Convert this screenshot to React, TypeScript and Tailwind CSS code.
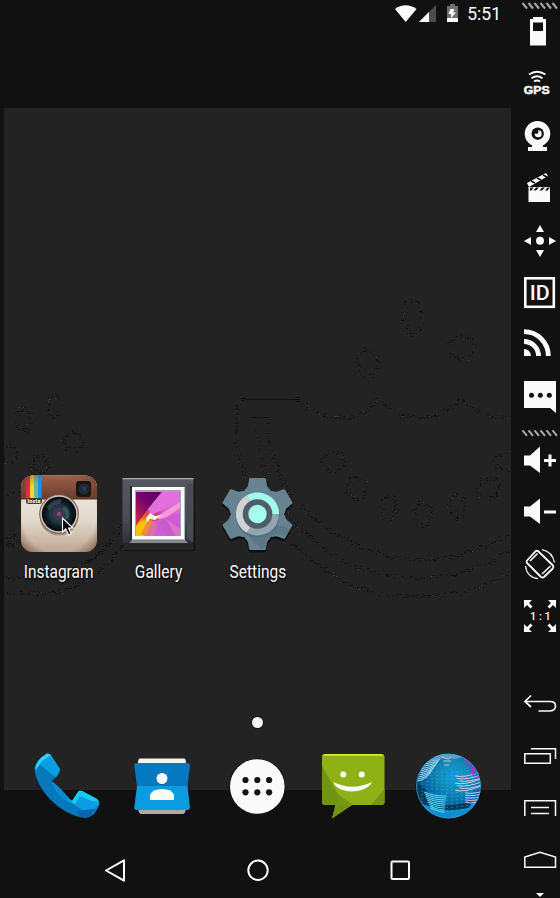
import type { ReactNode } from "react";

type Point = [number, number];

const SEEDS = [
  [412, 317, 9, 17], [461, 347, 13, 12], [367, 363, 11, 13], [333, 461, 11, 9],
  [356, 488, 10, 10], [388, 507, 8, 12], [422, 513, 9, 12], [456, 506, 8, 12],
  [488, 488, 10, 10], [506, 461, 11, 9], [23, 419, 7, 11], [54, 406, 6, 11],
  [73, 441, 10, 9], [39, 465, 8, 9], [8, 454, 8, 9], [12, 541, 5, 5],
];

const RINDS: Point[][] = [
  [[303, 403], [312, 411], [325, 416], [345, 417], [358, 415], [368, 408], [377, 398]],
  [[381, 400], [393, 411], [404, 416], [425, 417], [440, 413], [452, 406], [461, 397]],
  [[463, 401], [477, 411], [490, 416], [511, 417]],
  [[268, 419], [267, 433], [272, 455], [280, 475], [290, 493], [305, 511], [330, 530], [360, 547], [390, 556], [415, 559], [450, 557], [485, 546], [511, 532]],
  [[256, 430], [258, 445], [263, 470], [273, 494], [298, 527], [322, 548], [350, 565], [385, 575], [415, 578], [455, 574], [490, 562], [511, 549]],
  [[237, 404], [236, 440], [238, 455], [244, 474], [262, 510], [290, 542], [325, 570], [350, 584], [378, 593], [415, 596], [460, 593], [490, 583], [511, 571]],
  [[122, 520], [112, 538], [96, 555], [75, 567], [50, 578], [4, 577]],
  [[126, 542], [106, 565], [82, 582], [55, 593], [4, 593]],
  [[120, 531], [102, 552], [85, 565], [70, 572]],
  [[4, 494], [20, 490]],
];

// Scatter single pixels along the outlines of the watermelon wallpaper.
function buildSpecks() {
  let seed = 71;
  const rand = () => {
    seed = (seed * 16807) % 2147483647;
    return seed / 2147483647;
  };
  let dark = "";
  let light = "";
  const put = (x: number, y: number, chance: number, spread: number) => {
    if (rand() > chance) return;
    const px = Math.round(x + (rand() - 0.5) * spread);
    const py = Math.round(y + (rand() - 0.5) * spread);
    if (rand() < 0.04) light += `M${px} ${py}h1v1h-1z`;
    else dark += `M${px} ${py}h${rand() < 0.4 ? 2 : 1}v1H${px}z`;
  };
  SEEDS.forEach(([cx, cy, rx, ry]) => {
    for (let i = 0; i < 70; i++) {
      const a = (i / 70) * Math.PI * 2;
      put(cx + Math.cos(a) * rx, cy + Math.sin(a) * ry, 0.6, 5);
    }
  });
  RINDS.forEach((line) => {
    for (let i = 1; i < line.length; i++) {
      const [x0, y0] = line[i - 1];
      const [x1, y1] = line[i];
      const n = Math.hypot(x1 - x0, y1 - y0);
      for (let k = 0; k < n; k++) put(x0 + ((x1 - x0) * k) / n, y0 + ((y1 - y0) * k) / n, 0.62, 4);
    }
  });
  return { dark, light };
}

const specks = buildSpecks();

function Wallpaper() {
  return (
    <svg className="absolute inset-0 h-full w-full" viewBox="4 108 507 682" shapeRendering="crispEdges">
      <path d={specks.dark} fill="#121212" />
      <path d={specks.light} fill="#494949" />
      <path d="M245 399h55v1h-55zM241 398h5v1h-5zM241 400h3v1h-3zM295 397h5v1h-5zM296 401h4v1h-4zM252 417h17v1h-17z" fill="#111" />
    </svg>
  );
}

function StatusBar() {
  return (
    <header className="flex h-[108px] items-start justify-end">
      <svg className="h-[28px] w-[72px]" viewBox="392 0 72 28">
        <path d="M395 9Q405.500 1.500 416.500 9L405.700 22Z" fill="#fff" />
        <path d="M436 5V22H419Z" fill="#4c4b50" />
        <path d="M429 12V22H419Z" fill="#fff" />
        <path d="M450 4h5v2h3v16h-11V6h3z" fill="#706f73" />
        <path d="M447 18h11v4h-11z" fill="#fff" />
        <path d="M450.500 9h4l-1.500 3.500h3l-5 5.500v-4h-2.500z" fill="#fff" />
      </svg>
      <span className="mt-[2px] mr-[10px] ml-[3px] text-[17.5px] leading-6 text-white">5:51</span>
    </header>
  );
}

function InstagramIcon() {
  return (
    <svg className="h-[80px] w-[80px] overflow-visible" viewBox="19 474 80 80">
      <defs>
        <linearGradient id="leather" x2="0" y2="1">
          <stop stopColor="#a0674c" /><stop offset=".3" stopColor="#8b5540" /><stop offset="1" stopColor="#6b3c2b" />
        </linearGradient>
        <linearGradient id="cream" x2="0" y2="1">
          <stop stopColor="#f4f0e8" /><stop offset=".6" stopColor="#e2d7ca" /><stop offset="1" stopColor="#bda48f" />
        </linearGradient>
        <radialGradient id="edge" r=".7">
          <stop offset=".7" stopColor="#70452d" stopOpacity="0" /><stop offset="1" stopColor="#5b301d" stopOpacity=".7" />
        </radialGradient>
        <radialGradient id="lens">
          <stop stopColor="#6b3c62" /><stop offset=".25" stopColor="#35344c" /><stop offset=".5" stopColor="#203640" />
          <stop offset=".72" stopColor="#111c24" /><stop offset="1" stopColor="#05080b" />
        </radialGradient>
        <clipPath id="camera"><rect x="21" y="475.500" width="76" height="76.500" rx="12" /></clipPath>
      </defs>
      <g clipPath="url(#camera)">
        <path d="M21 475h76v78H21z" fill="url(#cream)" />
        <path d="M21 475h76v24H21z" fill="url(#leather)" />
        <path d="M26 475h4v24h-4z" fill="#ed2856" />
        <path d="M30 475h4v24h-4z" fill="#fad62d" />
        <path d="M34 475h4v24h-4z" fill="#68b98c" />
        <path d="M38 475h3.500v24H38z" fill="#1993e8" />
        <path d="M21 498.500h76v1H21z" fill="#51301f" />
        <path d="M21 475h76v78H21z" fill="url(#edge)" />
      </g>
      <rect x="26" y="498" width="16" height="6" rx="2.500" fill="#44392f" />
      <text x="27.500" y="502.800" fontSize="5.500" fontWeight="700" fill="#fff" textLength="13">Insta</text>
      <rect x="76" y="481" width="15" height="16" rx="3" fill="#1c1416" />
      <circle cx="84" cy="489" r="5.500" fill="#172e38" />
      <path d="M82 486l5 2-3 4z" fill="#5c2948" />
      <ellipse cx="59" cy="518" rx="19" ry="17.500" fill="#725c4d" opacity=".5" />
      <circle cx="59" cy="514" r="19.800" fill="#725f54" />
      <circle cx="59" cy="514" r="18.700" fill="#d3c8bd" />
      <circle cx="59" cy="514" r="17.200" fill="url(#lens)" />
      <path d="M47 507q6-9 15-8l-2 5q-7 0-11 7z" fill="#617f8c" opacity=".35" />
      <path d="M64 506q7 3 5 12l-4 2q2-8-3-11z" fill="#5a8c96" opacity=".35" />
      <circle cx="59" cy="514" r="5" fill="none" stroke="#584462" opacity=".6" />
      <circle cx="59" cy="514" r="2" fill="#97577e" opacity=".7" />
      <path d="M62.500 518v14l3.200-3 3 6 2.500-1.300-2.700-5.700h4.500z" fill="#080808" stroke="#fff" strokeWidth="1.100" />
    </svg>
  );
}

function GalleryIcon() {
  return (
    <svg className="h-[80px] w-[80px]" viewBox="118 474 80 80">
      <defs>
        <linearGradient id="photo" x1="0" y1="1" x2="1" y2="0">
          <stop stopColor="#f5c500" /><stop offset=".2" stopColor="#f5a80b" /><stop offset=".34" stopColor="#e4522d" />
          <stop offset=".48" stopColor="#c43a8a" /><stop offset=".6" stopColor="#d560cf" /><stop offset="1" stopColor="#ec78dc" />
        </linearGradient>
        <linearGradient id="dusk" x1="0" y1="1" x2=".7" y2="0">
          <stop stopColor="#d93a33" /><stop offset=".35" stopColor="#a31555" /><stop offset=".65" stopColor="#74066f" /><stop offset="1" stopColor="#5c0560" />
        </linearGradient>
        <linearGradient id="frame" x2="0" y2="1">
          <stop stopColor="#56585f" /><stop offset=".6" stopColor="#4b4d56" /><stop offset="1" stopColor="#2c2e35" />
        </linearGradient>
        <clipPath id="print"><path d="M136 492h44v44h-44z" /></clipPath>
      </defs>
      <path d="M124 480h71v71h-71z" fill="#111" />
      <path d="M124 479h69.500v71H124z" fill="#262626" />
      <path d="M122.500 478h71v65l-7 1h-50l-8-1h-6z" fill="url(#frame)" />
      <path d="M122.500 478h71v1.200h-71z" fill="#a8aaae" />
      <path d="M130 486h2v54h-2z" fill="#24272e" />
      <path d="M132 540h53l3 3h-59z" fill="#85878c" />
      <path d="M187 484h6v58l-6-4z" fill="#484a54" />
      <path d="M132 487h53v53h-53z" fill="#b4b4ba" />
      <path d="M132 487h52v52h-52z" fill="#fafafa" />
      <path d="M135 490h46v46h-46z" fill="#a6a4af" />
      <g clipPath="url(#print)">
        <path d="M136 492h44v44h-44z" fill="url(#photo)" />
        <path d="M136 492h26l-14 17-8 11-4 6z" fill="url(#dusk)" />
        <path d="M162 492h18v10l-29 13-3-6z" fill="#e270dc" />
        <path d="M156 517l24-15v6l-19 13z" fill="#f29ad8" />
        <path d="M154 521l26-8v23h-32z" fill="#d15bd0" />
        <path d="M159 522l8 14h8l-9-16z" fill="#c45dcb" />
        <path d="M166 519l14 10v7h-4z" fill="#dd72cd" />
        <path d="M136 536v-10l9-7 2 8-5 9z" fill="#f8c200" />
        <path d="M144 536l7-16 6 4-3 12z" fill="#de70a0" />
        <path d="M141 534l8-16 3 4-6 14z" fill="#f08a3c" />
        <path d="M146 518l4-5 5 3 7-1-7 5-5-1-4 4z" fill="#fff2dc" />
      </g>
    </svg>
  );
}

const TEETH = [
  "rotate(0)", "rotate(60)", "rotate(120)", "rotate(180)", "rotate(240)", "rotate(300)",
];

function SettingsIcon() {
  const tooth = "M-7.200-36H7.200Q8.200-36 8.400-35L9.500-28.500Q10-26.300 12.500-24.500L14.500-20H-14.500L-12.500-24.500Q-10-26.300-9.500-28.500L-8.400-35Q-8.200-36-7.200-36Z";
  return (
    <svg className="h-[80px] w-[80px]" viewBox="-39.500 -40 80 80">
      <g transform="translate(0 2)" fill="#111">
        {TEETH.map((t) => <path key={t} d={tooth} transform={t} stroke="#111" />)}
      </g>
      <g fill="#678391">
        <circle r="25.500" />
        {TEETH.map((t) => <path key={t} d={tooth} transform={t} />)}
      </g>
      <path d="M16 14L22 11 33 15 28 21 18 20 9 25 8 34 4 35-9 22z" fill="#5b7785" />
      <circle cy="1.500" r="22" fill="#526e7b" />
      <circle r="21.500" fill="#91a6b1" />
      <path d="M0 0L-10.750-18.600A21.500 21.500 0 0 1 21.500 0Z" fill="#a2faea" />
      <path d="M0 0L-10.750-18.600A21.500 21.500 0 0 0-10.750 18.600Z" fill="#d1d2d6" />
      <circle r="14.800" fill="#505c69" />
      <circle r="9.200" fill="#a5fdec" />
    </svg>
  );
}

function AppTile({ label, children }: { label: string; children: ReactNode }) {
  return (
    <div className="flex w-[99.5px] flex-col items-center">
      {children}
      <span className="mt-[6px] flex h-6 w-[80px] justify-center">
        <span className="scale-x-[0.86] text-[18px] leading-6 whitespace-nowrap text-white [text-shadow:0_1px_2px_#000,1px_1px_1px_#000]">
          {label}
        </span>
      </span>
    </div>
  );
}

function DialerIcon() {
  return (
    <svg className="h-[72px] w-[68px]" viewBox="32 750 68 72">
      <path d="M47 753.500Q50 753 51 755L60 769Q61 772 58 776L52 781Q53 788 72 801L78 792Q79 790 82 791L97 799Q100 801 99 806C96 814 91 818 85 818C65 817 37 794 34 769Q35 759 47 753.500Z" fill="#0878bd" stroke="#111" strokeWidth=".6" />
      <path d="M47 753.500Q50 753 51 755L60 769Q59 774 55 777L38 763Z" fill="#0b9de2" />
      <path d="M35 770Q36 760 47 753.500L51 755L42 761L38 767Z" fill="#32d4f5" />
      <path d="M52 781L60 788Q65 794 72 801L76 804L70 803Q53 793 52 781Z" fill="#098bd0" />
      <path d="M72 801L78 792Q79 790 82 791L97 799Q100 801 99 805L91 812Q82 811 73 804Z" fill="#0b9de2" />
      <path d="M72 801L78 792Q79 790 82 791L97 799L98 802L92 801L80 796L75 804L66 799Z" fill="#18c9f2" />
      <path d="M77 811L94 809Q91 817 85 818Q79 817 77 811Z" fill="#0663ad" />
    </svg>
  );
}

function ContactsIcon() {
  return (
    <svg className="h-[64px] w-[64px]" viewBox="130 754 64 64">
      <path d="M140 758.500h44q2 0 2 5h-48q0-5 2-5z" fill="#f6f6f6" />
      <path d="M138 809h48q-1 5-3 5h-42q-2 0-3-5z" fill="#ababab" />
      <path d="M136.500 763h51q3 0 2.400 3L187.500 786H137L134.300 766Q134 763 136.500 763Z" fill="#0579bf" />
      <path d="M137 786h50.500l2.400 21q0 3-2.400 3h-51q-2.500 0-2.200-3z" fill="#0b9ce0" />
      <circle cx="162" cy="779.500" r="5.500" fill="#056aa9" />
      <circle cx="162" cy="778.500" r="5.500" fill="#fafafa" />
      <path d="M150 800v-5q2-6 12-6t12 6v5z" fill="#fafafa" />
    </svg>
  );
}

function DrawerIcon() {
  return (
    <svg className="h-[60px] w-[60px]" viewBox="227.200 756 60 60">
      <circle cx="257.500" cy="786.800" r="28.300" fill="#111" />
      <circle cx="257.500" cy="786.500" r="27.300" fill="#fafafa" />
      {[245.700, 257.500, 269.300].map((x) => (
        <g key={x} fill="#151515">
          <circle cx={x} cy="780" r="3.100" />
          <circle cx={x} cy="792.300" r="3.100" />
        </g>
      ))}
    </svg>
  );
}

function MessengerIcon() {
  return (
    <svg className="h-[72px] w-[68px]" viewBox="319 750 68 72">
      <path d="M325 754h56q3.500 0 3.500 3v45q0 3-3 3H352L332 818.500 335.500 805H325q-3 0-3-3v-45q0-3 3-3z" fill="#8eb216" />
      <path d="M322 766L338 794 350 806 332 818.500 335.500 805H325q-3 0-3-3z" fill="#719415" />
      <path d="M338 794L352 804 347 806 338 805zM384.500 789V802q0 3-3 3H371z" fill="#759915" />
      <path d="M322.500 756q1-2 3-2h55q2.500 0 3.500 2v-.300H322.500z" fill="#dbe936" />
      <circle cx="343.300" cy="774.500" r="3" fill="#fff" />
      <circle cx="361.700" cy="774.500" r="3" fill="#fff" />
      <path d="M333.500 782Q352 791.500 372 782Q370 787 363 789.500Q352 793.500 341 789.500Q334 786 333.500 782Z" fill="#fafafa" />
    </svg>
  );
}

function BrowserIcon() {
  const rows = [0, 1, 2, 3, 4, 5, 6, 7, 8, 9, 10, 11];
  return (
    <svg className="h-[72px] w-[72px]" viewBox="412.800 750 72 72">
      <defs>
        <radialGradient id="ocean" cx=".58" cy=".35" r=".65">
          <stop stopColor="#129ce0" /><stop offset=".35" stopColor="#138ab6" /><stop offset=".6" stopColor="#086fac" /><stop offset="1" stopColor="#043e60" />
        </radialGradient>
        <clipPath id="globe"><circle cx="448.300" cy="786" r="32.300" /></clipPath>
      </defs>
      <circle cx="448.300" cy="786.500" r="33" fill="#111" />
      <g clipPath="url(#globe)">
        <path d="M415 753h67v67h-67z" fill="url(#ocean)" />
        <path d="M417 802Q448 815 480 797V820H420Z" fill="#0b8fd2" />
        <path d="M430 803Q449 809 474 800L468 808Q447 812 435 809Z" fill="#06395e" />
        <path d="M416 782l7 5 11 14 2 8-13-5-8-15z" fill="#073b57" />
        <g fill="none" stroke="#35bdf0" strokeWidth=".7" strokeDasharray="2 3" opacity=".7">
          {rows.map((i) => <path key={i} d={`M421 ${770 + i * 3.5}q26 5 54 -1`} />)}
        </g>
        <g fill="none" stroke="#a5dcec" strokeWidth="1">
          {rows.map((i) => <path key={i} d={`M${417 + i * 0.8} ${781 - i * 2.1}q${8 + i * 0.3} -1 ${13 + i * 0.5} -${8 - i * 0.3}`} />)}
        </g>
        <g fill="none" stroke="#d3c5e9" strokeWidth="1">
          {rows.map((i) => <path key={i} d={`M${455 + (i > 6 ? 10 : (i % 3) * 2)} ${776 + i * 2.4}q10 2 25 -4`} />)}
        </g>
        <g fill="none" stroke="#b72ad7" strokeWidth="1.100">
          {rows.slice(0, 8).map((i) => <path key={i} d={`M${463 + i * 1.3} ${757 + i * 2.5}q8 3 20 3`} />)}
        </g>
        <g fill="none" stroke="#59daf8" strokeWidth="1.100">
          {rows.slice(0, 9).map((i) => <path key={i} d={`M${424 + i * 0.8} ${792 + i * 2}q8 4 ${22 - i} 4`} />)}
        </g>
        <path d="M433 757q14-6 30 0l-9 2q-12-2-24 2z" fill="#6799cd" />
        <path d="M442 757l6 2 3-2M443 761h8M444 765h5" fill="none" stroke="#bdc7e8" />
      </g>
      <circle cx="448.300" cy="786" r="32" fill="none" stroke="#35a9dc" strokeWidth=".7" />
    </svg>
  );
}

function NavigationBar() {
  return (
    <nav className="flex h-[108px] items-end justify-center gap-[118.5px] pb-[16px] pl-[4px]">
      <svg className="h-6 w-6" viewBox="103 858 24 24" fill="none" stroke="#fff" strokeWidth="2" strokeLinejoin="round">
        <path d="M106 870.500L124 860.300V880.700Z" />
      </svg>
      <svg className="h-6 w-6" viewBox="245.500 858 24 24" fill="none" stroke="#fff" strokeWidth="2">
        <circle cx="257.500" cy="870.300" r="9.700" />
      </svg>
      <svg className="h-6 w-6" viewBox="388 858 24 24" fill="none" stroke="#fff" strokeWidth="2">
        <rect x="391.500" y="861.500" width="17.500" height="17.500" rx="1" />
      </svg>
    </nav>
  );
}

function HomeScreen() {
  return (
    <main className="relative ml-1 flex h-[682px] flex-col bg-[#232323]">
      <Wallpaper />
      <div className="relative mt-[366px] flex pl-[5px]">
        <AppTile label="Instagram"><InstagramIcon /></AppTile>
        <AppTile label="Gallery"><GalleryIcon /></AppTile>
        <AppTile label="Settings"><SettingsIcon /></AppTile>
      </div>
      <div className="relative mt-[133px] flex h-[12px] justify-center">
        <span className="h-[11px] w-[11px] rounded-full bg-[#fafafa] ring-1 ring-[#111]" />
      </div>
      <div className="relative mt-[20px] grid h-[76px] w-[478px] shrink-0 grid-cols-5 place-items-center self-center">
        <DialerIcon />
        <ContactsIcon />
        <DrawerIcon />
        <MessengerIcon />
        <BrowserIcon />
      </div>
    </main>
  );
}

function Tool({ top, height, children }: { top: number; height: number; children: ReactNode }) {
  return (
    <svg className="block w-[49px] shrink-0" style={{ height }} viewBox={`511 ${top} 49 ${height}`} fill="#fafafa">
      {children}
    </svg>
  );
}

function Grip({ y }: { y: number }) {
  return (
    <g stroke="#aaa" strokeWidth="2">
      {[0, 1, 2, 3, 4, 5].map((i) => <path key={i} d={`M${522.500 + i * 6} ${y}l4.500 5.500`} />)}
    </g>
  );
}

function Toolbar() {
  return (
    <aside className="flex w-[49px] flex-col overflow-hidden">
      <Tool top={0} height={10}><Grip y={3} /></Tool>
      <Tool top={10} height={48}>
        <path d="M533 17h10v2h3v26.500h-16V19h3zM533 22.500v8.500h10v-8.500z" fillRule="evenodd" />
      </Tool>
      <Tool top={58} height={52}>
        <path d="M529 74.500q8-5.500 16.500 0M531.500 78.300q5.500-4 11 0M534 81.500q3-2 6 0" fill="none" stroke="#fafafa" strokeWidth="1.900" />
        <text x="523.800" y="94" fontSize="11.500" fontWeight="900" textLength="26" lengthAdjust="spacingAndGlyphs" className="font-['Liberation_Sans',sans-serif]" stroke="#fafafa" strokeWidth=".5">GPS</text>
      </Tool>
      <Tool top={110} height={52}>
        <circle cx="537.500" cy="133.700" r="12.800" />
        <path d="M532 144h11v3h4v4h-19v-4h4z" />
        <circle cx="537.700" cy="133.700" r="6.200" fill="#111" />
        <path d="M538 130.200a3.500 3.500 0 1 1-3.300 3.300l2.300.5 1.500-1.500z" />
      </Tool>
      <Tool top={162} height={52}>
        <path d="M528.500 187H550v15h-21.500z" />
        <path d="M530.500 187.500l3 0-2 3h-2zM536 187.500h3l-3 3h-2.500zM542 187.500h3l-3 3h-2.500zM547.500 187.500h2.500l-2.500 3H545z" fill="#111" />
        <path d="M527 183L546 173 548 176 529 187Z" />
        <path d="M531 181l4 2M537 178l4 2M543 175l4 2" stroke="#111" strokeWidth="1.500" />
      </Tool>
      <Tool top={214} height={52}>
        <circle cx="540" cy="240.800" r="4" />
        <path d="M540 225l4 7h-8zM540 257l-4-7h8zM524 241l7-4v8zM556 241l-7-4v8z" />
      </Tool>
      <Tool top={266} height={52}>
        <rect x="525.300" y="278.300" width="28.500" height="28.500" fill="none" stroke="#fafafa" strokeWidth="2.600" />
        <text x="529.800" y="300" fontSize="19.500" fontWeight="500" textLength="20" lengthAdjust="spacingAndGlyphs" className="font-['Roboto',sans-serif]">ID</text>
      </Tool>
      <Tool top={318} height={52}>
        <path d="M524 349a7 7 0 0 1 7 7h-7z" />
        <path d="M524 341.500a14.500 14.500 0 0 1 14.500 14.500M524 331.700a24.300 24.300 0 0 1 24.300 24.300" fill="none" stroke="#fafafa" strokeWidth="4.800" />
      </Tool>
      <Tool top={370} height={54}>
        <path d="M524 381h32v32l-6-5h-26z" />
        {[531.500, 540.300, 549.300].map((x) => <circle key={x} cx={x} cy="395.300" r="2.500" fill="#111" />)}
      </Tool>
      <Tool top={424} height={14}><Grip y={430.300} /></Tool>
      <Tool top={438} height={48}>
        <path d="M524 455.500h6l10-9v26.500l-10-7.500h-6zM548.500 454.500h3v4.500h4.500v3h-4.500v4.500h-3V462H544v-3h4.500z" />
      </Tool>
      <Tool top={486} height={50}>
        <path d="M524 506.500h6l10-8v25.500l-10-7.500h-6zM544 510.500h12v3h-12z" />
      </Tool>
      <Tool top={536} height={54}>
        <g fill="none" stroke="#fafafa" strokeWidth="1.800" strokeLinejoin="round">
          <path d="M527 560.500L535.500 551.300Q537 550 538.500 551.500L553 565.500Q554 567 552.800 568.500L544 577Q542.500 578 541 577L527 563Q526 562 527 560.500Z" />
          <path d="M530 561l7.500-7.500M542 574l8.500-8" strokeWidth="1.600" />
          <path d="M542 549.700Q552.500 552 554.500 562.500M525.600 566Q526.500 577 538 578.700" strokeWidth="1.200" />
        </g>
      </Tool>
      <Tool top={590} height={52}>
        <path d="M524 600h8l-3 3 3.500 3.500-2 2-3.500-3.500-3 3zM556 600h-8l3 3-3.500 3.500 2 2 3.500-3.500 3 3zM524 632h8l-3-3 3.500-3.500-2-2-3.500 3.500-3-3z" />
        <path d="M556 632h-8l3-3-3.500-3.500 2-2 3.500 3.500 3-3z" />
        <g fontSize="11" className="font-['Roboto',sans-serif]">
          <text x="530" y="620" fontWeight="500">1</text>
          <text x="539" y="620" fontWeight="500">:</text>
          <text x="544.500" y="620" fontWeight="500">1</text>
        </g>
      </Tool>
      <Tool top={642} height={86}>
        <path d="M531 695.500L525 701.500L531 707M525 701.500H550Q555.500 701.500 555.500 706T550 711H538.500" fill="none" stroke="#fafafa" strokeWidth="1.700" />
      </Tool>
      <Tool top={728} height={52}>
        <path d="M524.800 753.800h25.500v9.500h-25.500zM531 748.700h24.500V759" fill="none" stroke="#fafafa" strokeWidth="1.500" />
      </Tool>
      <Tool top={780} height={52}>
        <path d="M524.800 816v-15.300h30.700V816M531 807.500h18M531 813.500h18" fill="none" stroke="#fafafa" strokeWidth="1.500" />
      </Tool>
      <Tool top={832} height={52}>
        <path d="M524.800 867.300V857L540 852.200L555.500 857V867.300Z" fill="none" stroke="#fafafa" strokeWidth="1.500" />
      </Tool>
      <Tool top={884} height={14}><path d="M536 893h8l-4 4z" /></Tool>
    </aside>
  );
}

export default function App() {
  return (
    <div className="flex h-[898px] w-[560px] overflow-hidden bg-[#111111] font-['Roboto',sans-serif]">
      <div className="flex w-[511px] flex-col">
        <StatusBar />
        <HomeScreen />
        <NavigationBar />
      </div>
      <Toolbar />
    </div>
  );
}
